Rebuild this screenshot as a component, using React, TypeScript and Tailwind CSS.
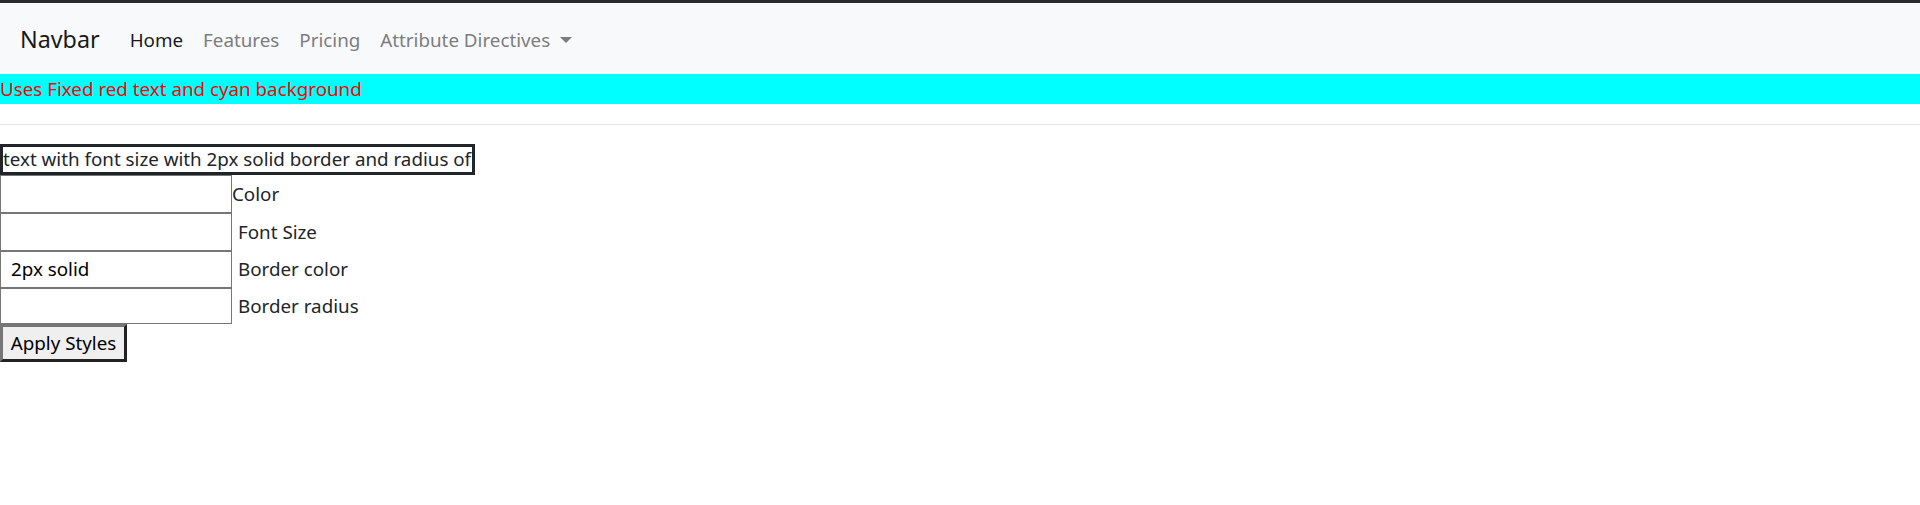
import React from "react";

function Row({ label, value, gap, h }: { label: string; value?: string; gap: boolean; h: string }) {
  return (
    <div className={`flex items-center ${h}`}>
      <div className={`w-[232px] ${h} border border-[#767676] flex items-center pl-[10px] text-[18.8px] text-black`}>
        {value}
      </div>
      <span className={`text-[18.8px] text-[#212529] ${gap ? "ml-[6px]" : ""}`}>{label}</span>
    </div>
  );
}

export default function App() {
  return (
    <div className="w-[1920px] min-h-[505px] bg-white font-['Noto_Sans',sans-serif]">
      <div className="h-[3px] bg-[#2b2b2b]" />
      <nav className="h-[71px] bg-[#f8f9fa] flex items-center pl-[20px] pt-[3px]">
        <span className="text-[23.3px] text-[#1a1a1a] mr-[20px] leading-none">Navbar</span>
        <div className="flex items-center text-[18.8px]">
          <span className="px-[10px] text-[#1a1a1a]">Home</span>
          <span className="px-[10px] text-[#7c7d7e]">Features</span>
          <span className="px-[10px] text-[#7c7d7e]">Pricing</span>
          <span className="px-[10px] text-[#7c7d7e] flex items-center">
            Attribute Directives
            <span className="ml-[10px] w-0 h-0 border-l-[6px] border-r-[6px] border-t-[6px] border-l-transparent border-r-transparent border-t-[#7c7d7e]" />
          </span>
        </div>
      </nav>
      <div className="h-[30px] bg-[#00ffff] text-[#ff0000] text-[18.8px] leading-[30px]">
        Uses Fixed red text and cyan background
      </div>
      <div className="h-[20px]" />
      <div className="h-px bg-[#e6e6e6]" />
      <div className="h-[19px]" />
      <div className="inline-block h-[31px] border-[3px] border-[#212529] text-[18.8px] leading-[25px] text-[#212529] pr-[1px]">
        text with font size with 2px solid border and radius of
      </div>
      <div className="flex flex-col">
        <Row label="Color" gap={false} h="h-[38px]" />
        <Row label="Font Size" gap={true} h="h-[38px]" />
        <Row label="Border color" value="2px solid" gap={true} h="h-[37px]" />
        <Row label="Border radius" gap={true} h="h-[36px]" />
      </div>
      <button className="w-[127px] h-[38px] bg-[#efefef] border-[3px] border-t-[#767676] border-l-[#767676] border-r-[#222] border-b-[#222] text-[18.8px] text-black flex items-center justify-center">
        Apply Styles
      </button>
    </div>
  );
}
